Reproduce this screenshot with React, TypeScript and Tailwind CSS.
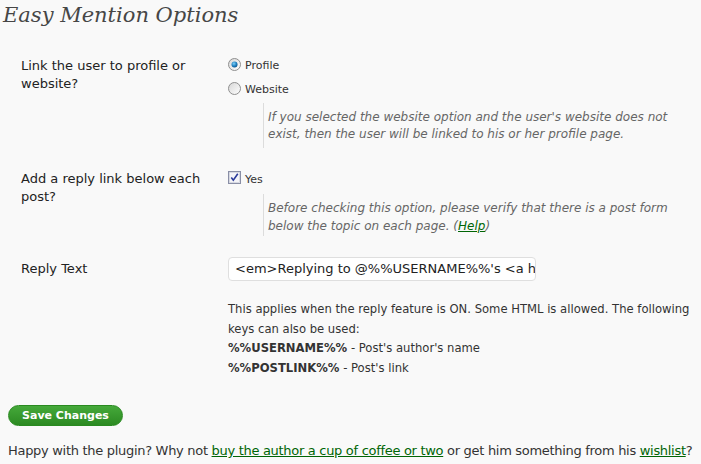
import React from "react";

function Radio({ checked }: { checked?: boolean }) {
  return (
    <svg width="13" height="13" viewBox="0 0 13 13" className="shrink-0">
      <defs>
        <linearGradient id={checked ? "rg1" : "rg2"} x1="0" y1="0" x2="1" y2="1">
          <stop offset="0" stopColor="#d6d6d6" />
          <stop offset="1" stopColor="#ffffff" />
        </linearGradient>
        <radialGradient id="dot" cx="0.4" cy="0.35" r="0.7">
          <stop offset="0" stopColor="#7fd0f7" />
          <stop offset="0.6" stopColor="#1e7fc0" />
          <stop offset="1" stopColor="#0b4f86" />
        </radialGradient>
      </defs>
      <circle cx="6.5" cy="6.5" r="6" fill={`url(#${checked ? "rg1" : "rg2"})`} stroke="#8f8f8f" strokeWidth="1" />
      {checked && <circle cx="6.5" cy="6.5" r="3" fill="url(#dot)" />}
    </svg>
  );
}

function Check() {
  return (
    <svg width="13" height="13" viewBox="0 0 13 13" className="shrink-0">
      <rect x="0.5" y="0.5" width="12" height="12" fill="#e6e6ee" stroke="#8a8fa6" />
      <rect x="1.5" y="1.5" width="10" height="10" fill="#f4f4f8" stroke="#c9ccd8" strokeWidth="0.6" />
      <path d="M3.3 6.6 L5.3 9.2 L9.8 2.8" fill="none" stroke="#2a3a9a" strokeWidth="1.6" />
    </svg>
  );
}

export default function App() {
  const sans = { fontFamily: '"DejaVu Sans", Verdana, sans-serif' };
  return (
    <div className="w-[701px] h-[464px] bg-[#f9f9f9] text-[#333] overflow-hidden" style={sans}>
      <h2
        className="pl-[3px] pt-[1px] h-[32px] text-[21px] leading-[28px] italic text-[#464646]"
        style={{ fontFamily: '"DejaVu Serif", Georgia, serif' }}
      >
        Easy Mention Options
      </h2>

      {/* Row 1 */}
      <div className="grid grid-cols-[228px_1fr] mt-[26px]">
        <div className="pl-[21px] text-[13px] leading-[18px] -mt-[1px] text-[#222]">
          Link the user to profile or
          <br />
          website?
        </div>
        <div>
          <div className="flex items-start h-[24px] text-[11px]">
            <Radio checked />
            <span className="ml-[4px] leading-[15px]">Profile</span>
          </div>
          <div className="flex items-start h-[24px] text-[11px]">
            <Radio />
            <span className="ml-[4px] leading-[15px]">Website</span>
          </div>
          <div className="ml-[35px] mt-[-3px] border-l border-[#dcdcdc] pl-[4px] pt-[6px] pb-[5px] text-[12px] leading-[17px] italic text-[#666] whitespace-nowrap">
            If you selected the website option and the user's website does not
            <br />
            exist, then the user will be linked to his or her profile page.
          </div>
        </div>
      </div>

      {/* Row 2 */}
      <div className="grid grid-cols-[228px_1fr] mt-[23px]">
        <div className="pl-[21px] text-[13px] leading-[18px] -mt-[1px] text-[#222]">
          Add a reply link below each
          <br />
          post?
        </div>
        <div>
          <div className="flex items-start h-[13px] text-[11px]">
            <Check />
            <span className="ml-[4px] leading-[15px] mt-[1px]">Yes</span>
          </div>
          <div className="ml-[35px] mt-[10px] border-l border-[#dcdcdc] pl-[4px] pt-[5px] pb-[1px] text-[12px] leading-[18px] italic text-[#666] whitespace-nowrap">
            Before checking this option, please verify that there is a post form
            <br />
            below the topic on each page. (
            <a className="text-[#006505] underline">Help</a>)
          </div>
        </div>
      </div>

      {/* Row 3 */}
      <div className="grid grid-cols-[228px_1fr] mt-[21px]">
        <div className="pl-[21px] text-[13px] leading-[18px] mt-[3px] text-[#222]">Reply Text</div>
        <div>
          <div className="w-[308px] h-[24px] bg-white border border-[#dfdfdf] rounded-[4px] pl-[6px] overflow-hidden whitespace-nowrap text-[13px] leading-[22px] text-[#222]">
            &lt;em&gt;Replying to @%%USERNAME%%'s &lt;a href="%%POSTLINK%%"&gt;post&lt;/a&gt;:&lt;/em&gt;
          </div>
          <div className="mt-[19px] text-[11.6px] leading-[19.5px] text-[#333] whitespace-nowrap">
            This applies when the reply feature is ON. Some HTML is allowed. The following
            <br />
            keys can also be used:
            <br />
            <b>%%USERNAME%%</b> - Post's author's name
            <br />
            <b>%%POSTLINK%%</b> - Post's link
          </div>
        </div>
      </div>

      <div className="pl-[8px] mt-[24px]">
        <button className="h-[21px] w-[115px] rounded-full bg-gradient-to-b from-[#45a93a] to-[#2c8a22] text-white text-[11px] font-bold leading-[19px] border border-[#298a20] text-center">
          Save Changes
        </button>
      </div>

      <div className="pl-[8px] mt-[16px] text-[13px] leading-[18px] tracking-[-0.3px] text-[#333] whitespace-nowrap">
        Happy with the plugin? Why not{" "}
        <a className="text-[#006505] underline">buy the author a cup of coffee or two</a> or get him something from
        his <a className="text-[#006505] underline">wishlist</a>?
      </div>
    </div>
  );
}
